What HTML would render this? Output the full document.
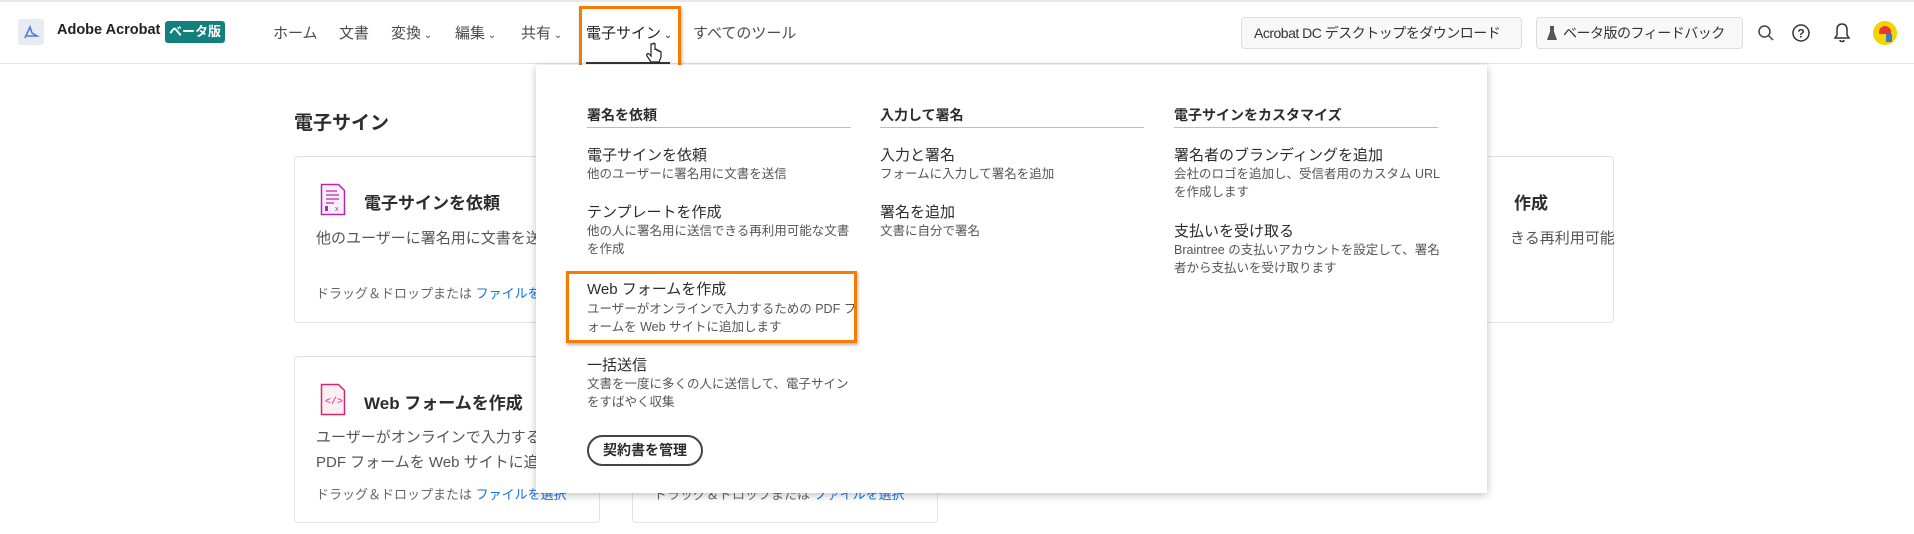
<!DOCTYPE html>
<html><head><meta charset="utf-8"><style>
*{margin:0;padding:0;box-sizing:border-box}
body{width:1914px;height:534px;overflow:hidden;background:#fff;font-family:"Liberation Sans","Noto Sans CJK JP",sans-serif;color:#2c2c2c;position:relative}
.a{position:absolute;white-space:nowrap}
.hdr{position:absolute;left:0;top:0;width:1914px;height:64px;border-bottom:1px solid #e4e4e4;border-top:2px solid #e8e8e8}
.nav{font-size:15px;color:#4b4b4b;top:22px}
.btn{position:absolute;top:17px;height:32px;border:1px solid #dcdcdc;border-radius:4px;background:#f8f8f8;font-size:14px;letter-spacing:-0.5px;color:#333;line-height:30px;padding-left:12px;white-space:nowrap;overflow:hidden}
.card{position:absolute;width:306px;height:167px;border:1px solid #e3e3e3;border-radius:4px;background:#fff}
.ct{font-size:17px;font-weight:bold;color:#2c2c2c}
.cd{font-size:15.5px;color:#555}
.cs{font-size:13px;color:#666}
.cs b{color:#1473e6;font-weight:normal}
.dd{position:absolute;left:536px;top:65px;width:951px;height:428px;background:#fff;box-shadow:0 2px 8px rgba(0,0,0,.25)}
.h{font-size:14px;font-weight:bold;color:#2c2c2c}
.ul{position:absolute;height:1px;background:#bdbdbd;width:264px}
.t{font-size:15px;color:#2c2c2c}
.d{font-size:12.5px;color:#555;line-height:18px}
.ob{position:absolute;border:3px solid #f57c00;box-shadow:1px 2px 3px rgba(0,0,0,.3)}
</style></head><body>
<div class="hdr"></div>
<div class="a" style="left:18px;top:19px;width:26px;height:26px;background:#e8ecf2;border-radius:3px"></div>
<svg class="a" style="left:22px;top:23px" width="18" height="18" viewBox="0 0 18 18"><path d="M3 15 L8 4 L10 10 L15 13 L5 13" fill="none" stroke="#4a7bd8" stroke-width="1.6"/></svg>
<div class="a" style="left:57px;top:22px;font-size:14.5px;font-weight:bold;color:#222">Adobe Acrobat</div>
<div class="a" style="left:165px;top:21px;width:60px;height:22px;background:#12807c;color:#fff;font-size:13px;font-weight:bold;border-radius:3px;text-align:center;line-height:22px">ベータ版</div>
<div class="a nav" style="left:273px">ホーム</div>
<div class="a nav" style="left:339px">文書</div>
<div class="a nav" style="left:391px">変換<span style="font-size:10px"> ⌄</span></div>
<div class="a nav" style="left:455px">編集<span style="font-size:10px"> ⌄</span></div>
<div class="a nav" style="left:521px">共有<span style="font-size:10px"> ⌄</span></div>
<div class="a nav" style="left:586px;color:#222">電子サイン<span style="font-size:10px"> ⌄</span></div>
<div class="a" style="left:586px;top:62px;width:84px;height:2px;background:#333"></div>
<div class="a nav" style="left:693px">すべてのツール</div>
<div class="ob" style="left:579px;top:6px;width:102px;height:71px"></div>
<svg class="a" style="left:646px;top:42px" width="18" height="24" viewBox="0 0 18 24"><path d="M5 2 v12 l-2-2 c-1-1-3 0-2 2 l4 6 h8 l2-5 v-5 c0-1-2-1-2 0 v-1 c0-1-2-1-2 0 v-1 c0-1-2-1-2 0 V2 c0-1-2-1-2 0z" fill="#fff" stroke="#222" stroke-width="1.2"/></svg>
<div class="btn" style="left:1241px;width:281px">Acrobat DC デスクトップをダウンロード</div>
<div class="btn" style="left:1536px;width:207px;padding-left:10px"><span style="display:inline-block;width:10px;height:14px;background:#555;clip-path:polygon(30% 0,70% 0,70% 40%,100% 100%,0 100%,30% 40%);vertical-align:-2px;margin-right:6px"></span>ベータ版のフィードバック</div>
<svg class="a" style="left:1757px;top:24px" width="18" height="18" viewBox="0 0 18 18"><circle cx="7.5" cy="7.5" r="5.5" fill="none" stroke="#444" stroke-width="1.5"/><path d="M11.5 11.5 L16 16" stroke="#444" stroke-width="1.5"/></svg>
<svg class="a" style="left:1791px;top:23px" width="20" height="20" viewBox="0 0 20 20"><circle cx="10" cy="10" r="8" fill="none" stroke="#333" stroke-width="1.5"/><text x="10" y="14.5" font-size="12" font-weight="bold" text-anchor="middle" fill="#333" font-family="Liberation Sans">?</text></svg>
<svg class="a" style="left:1833px;top:22px" width="18" height="22" viewBox="0 0 18 22"><path d="M9 2 c-4 0-5 3-5 6 v5 l-2 3 h14 l-2-3 v-5 c0-3-1-6-5-6z M7 18 c0 2 4 2 4 0" fill="none" stroke="#333" stroke-width="1.5"/></svg>
<div class="a" style="left:1873px;top:21px;width:24px;height:24px;border-radius:50%;background:#f2d500"></div>
<div class="a" style="left:1879px;top:26px;width:12px;height:8px;border-radius:6px 6px 0 0;background:#e33"></div>
<div class="a" style="left:1886px;top:34px;width:6px;height:8px;background:#3a7bd5"></div>

<div class="a" style="left:294px;top:108px;font-size:19px;font-weight:bold;color:#2c2c2c">電子サイン</div>

<div class="card" style="left:294px;top:156px"></div>
<div class="card" style="left:632px;top:156px"></div>
<div class="card" style="left:970px;top:156px"></div>
<div class="card" style="left:1308px;top:156px"></div>
<div class="card" style="left:294px;top:356px"></div>
<div class="card" style="left:632px;top:356px"></div>

<svg class="a" style="left:320px;top:183px" width="26" height="33" viewBox="0 0 26 33"><path d="M1.5 1.5 h17 l6 6 v24 h-23z" fill="#fbeefb" stroke="#b02ab5" stroke-width="1.5"/><path d="M6 8h11M6 12h13M6 16h13M6 20h8" stroke="#b02ab5" stroke-width="1.2"/><rect x="5" y="23" width="3" height="5" fill="#b02ab5"/><text x="15" y="28" font-size="7" fill="#b02ab5">x</text></svg>
<div class="a ct" style="left:364px;top:189px">電子サインを依頼</div>
<div class="a cd" style="left:316px;top:227px;font-size:15px">他のユーザーに署名用に文書を送信</div>
<div class="a cs" style="left:316px;top:283px">ドラッグ＆ドロップまたは <b>ファイルを選択</b></div>
<div class="a ct" style="left:1514px;top:189px">作成</div>
<div class="a cd" style="left:1510px;top:227px;font-size:15px">きる再利用可能</div>

<svg class="a" style="left:320px;top:383px" width="26" height="33" viewBox="0 0 26 33"><path d="M1.5 1.5 h17 l6 6 v24 h-23z" fill="#fdeef4" stroke="#d1286e" stroke-width="1.5"/><text x="5" y="21" font-size="10" fill="#d1286e" font-family="Liberation Mono">&lt;/&gt;</text></svg>
<div class="a ct" style="left:364px;top:389px">Web フォームを作成</div>
<div class="a cd" style="left:316px;top:426px;font-size:15px">ユーザーがオンラインで入力するための</div>
<div class="a cd" style="left:316px;top:451px;font-size:15px">PDF フォームを Web サイトに追加します</div>
<div class="a cs" style="left:316px;top:484px">ドラッグ＆ドロップまたは <b>ファイルを選択</b></div>
<div class="a cs" style="left:654px;top:484px">ドラッグ＆ドロップまたは <b>ファイルを選択</b></div>

<div class="dd"></div>
<div class="a h" style="left:587px;top:105px">署名を依頼</div><div class="ul" style="left:587px;top:127px"></div>
<div class="a h" style="left:880px;top:105px">入力して署名</div><div class="ul" style="left:880px;top:127px"></div>
<div class="a h" style="left:1174px;top:105px">電子サインをカスタマイズ</div><div class="ul" style="left:1174px;top:127px"></div>

<div class="a t" style="left:587px;top:144px">電子サインを依頼</div>
<div class="a d" style="left:587px;top:165px">他のユーザーに署名用に文書を送信</div>
<div class="a t" style="left:587px;top:201px">テンプレートを作成</div>
<div class="a d" style="left:587px;top:222px">他の人に署名用に送信できる再利用可能な文書<br>を作成</div>
<div class="a t" style="left:587px;top:278px">Web フォームを作成</div>
<div class="a d" style="left:587px;top:300px">ユーザーがオンラインで入力するための PDF フ<br>ォームを Web サイトに追加します</div>
<div class="a t" style="left:587px;top:354px">一括送信</div>
<div class="a d" style="left:587px;top:375px">文書を一度に多くの人に送信して、電子サイン<br>をすばやく収集</div>
<div class="a" style="left:587px;top:435px;width:116px;height:31px;border:2px solid #444;border-radius:16px;font-size:14px;font-weight:bold;text-align:center;line-height:27px;color:#2c2c2c">契約書を管理</div>
<div class="ob" style="left:566px;top:271px;width:291px;height:72px"></div>

<div class="a t" style="left:880px;top:144px">入力と署名</div>
<div class="a d" style="left:880px;top:165px">フォームに入力して署名を追加</div>
<div class="a t" style="left:880px;top:201px">署名を追加</div>
<div class="a d" style="left:880px;top:222px">文書に自分で署名</div>

<div class="a t" style="left:1174px;top:144px">署名者のブランディングを追加</div>
<div class="a d" style="left:1174px;top:165px">会社のロゴを追加し、受信者用のカスタム URL<br>を作成します</div>
<div class="a t" style="left:1174px;top:220px">支払いを受け取る</div>
<div class="a d" style="left:1174px;top:241px">Braintree の支払いアカウントを設定して、署名<br>者から支払いを受け取ります</div>
</body></html>
